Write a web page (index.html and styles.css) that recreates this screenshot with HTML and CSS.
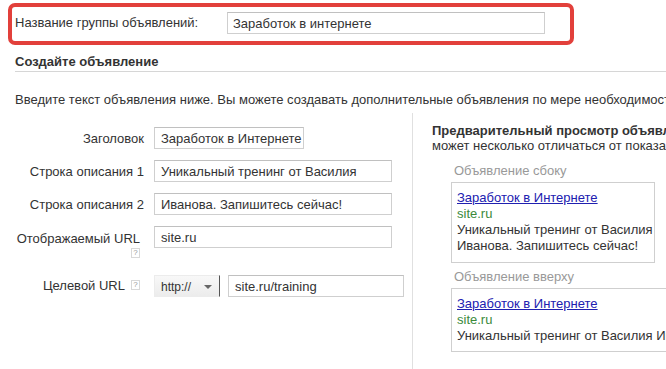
FILE: index.html
```html
<!DOCTYPE html>
<html lang="ru">
<head>
    <meta charset="UTF-8">
    <meta name="viewport" content="width=device-width, initial-scale=1.0">
    <title>Создайте объявление</title>
    <link rel="stylesheet" href="styles.css">
</head>
<body>
<div class="page">

    <!-- Ad group name -->
    <div class="group-box">
        <label class="group-label">Название группы объявлений:</label>
        <div class="text-input group-input">Заработок в интернете</div>
    </div>

    <h2 class="section-title">Создайте объявление</h2>
    <p class="intro">Введите текст объявления ниже. Вы можете создавать дополнительные объявления по мере необходимости.</p>

    <div class="ad-form">
        <!-- Fields -->
        <div class="fields">
            <div class="field-row">
                <div class="field-label">Заголовок</div>
                <div class="text-input short">Заработок в Интернете</div>
            </div>
            <div class="field-row">
                <div class="field-label">Строка описания 1</div>
                <div class="text-input">Уникальный тренинг от Василия</div>
            </div>
            <div class="field-row">
                <div class="field-label">Строка описания 2</div>
                <div class="text-input">Иванова. Запишитесь сейчас!</div>
            </div>
            <div class="field-row top url-row">
                <div class="field-label stacked">
                    <span>Отображаемый URL</span>
                    <span class="help">?</span>
                </div>
                <div class="text-input">site.ru</div>
            </div>
            <div class="field-row">
                <div class="field-label inline">
                    <span>Целевой URL</span>
                    <span class="help">?</span>
                </div>
                <div class="select">
                    <span>http://</span>
                    <span class="arrow"></span>
                </div>
                <div class="text-input target">site.ru/training</div>
            </div>
        </div>

        <!-- Preview -->
        <div class="preview">
            <div class="preview-title">Предварительный просмотр объявления</div>
            <div class="preview-note">может несколько отличаться от показа на сайте</div>

            <div class="preview-caption">Объявление сбоку</div>
            <div class="ad-box side">
                <a href="#" class="ad-link">Заработок в Интернете</a>
                <div class="ad-url">site.ru</div>
                <div class="ad-text">Уникальный тренинг от Василия</div>
                <div class="ad-text">Иванова. Запишитесь сейчас!</div>
            </div>

            <div class="preview-caption">Объявление вверху</div>
            <div class="ad-box top-ad">
                <a href="#" class="ad-link">Заработок в Интернете</a>
                <div class="ad-url">site.ru</div>
                <div class="ad-text">Уникальный тренинг от Василия Иванова. Запишитесь сейчас!</div>
            </div>
        </div>
    </div>

</div>
</body>
</html>
```

FILE: styles.css
```css
/* Base */
body {
    margin: 0;
    font-family: "Liberation Sans", Arial, sans-serif;
    font-size: 13px;
    line-height: 15px;
    color: #333;
    background: #fff;
    overflow: hidden;
}

.page {
    padding: 3px 0 0 8px;
    white-space: nowrap;
}

/* Inputs */
.text-input {
    box-sizing: border-box;
    width: 238px;
    height: 22px;
    border: 1px solid #cfcfcf;
    border-top-color: #c0c0c0;
    padding: 3px 6px 0;
    color: #333;
    background: #fff;
    overflow: hidden;
}

.text-input.short {
    width: 150px;
}

.text-input.target {
    width: 176px;
    margin-left: 8px;
}

/* Ad group box */
.group-box {
    display: flex;
    align-items: center;
    width: 558px;
    height: 34px;
    box-sizing: content-box;
    border: 4px solid #e2403b;
    border-radius: 7px;
    padding: 0;
}

.group-label {
    padding-left: 3px;
    width: 212px;
    margin-top: -3px;
}

.text-input.group-input {
    width: 318px;
    margin-top: -2px;
    padding-left: 5px;
}

/* Section title */
.section-title {
    margin: 9px 0 0 7px;
    padding-bottom: 2px;
    font-size: 13px;
    line-height: 15px;
    font-weight: bold;
    color: #333;
    border-bottom: 1px solid #d6d6d6;
}

.intro {
    margin: 20px 0 0 7px;
}

/* Form layout */
.ad-form {
    display: flex;
    margin: 6px 0 0 7px;
}

.fields {
    flex-shrink: 0;
    width: 397px;
    border-right: 1px solid #e0e0e0;
    padding-top: 14px;
    height: 260px;
}

.field-row {
    display: flex;
    align-items: center;
    margin-bottom: 11px;
}

.field-row.top {
    align-items: flex-start;
}

.field-row.url-row {
    margin-bottom: 16px;
}

.field-label {
    width: 129px;
    margin-right: 10px;
    text-align: right;
}

.field-label.stacked {
    display: flex;
    flex-direction: column;
    align-items: flex-end;
    padding-top: 5px;
    margin-right: 14px;
    width: 125px;
}

.field-label.inline {
    display: flex;
    justify-content: flex-end;
    align-items: center;
    gap: 6px;
    width: 125px;
    margin-right: 14px;
}

.help {
    display: block;
    box-sizing: border-box;
    width: 9px;
    height: 10px;
    border: 1px solid #d8d8d8;
    font-size: 8px;
    line-height: 8px;
    text-align: center;
    color: #999;
    margin-top: 2px;
}

.field-label.inline .help {
    margin-top: -2px;
}

/* Select */
.select {
    box-sizing: border-box;
    display: flex;
    align-items: center;
    justify-content: space-between;
    width: 66px;
    height: 22px;
    margin-top: 1px;
    padding: 3px 4px 0 6px;
    font-size: 12px;
    background: linear-gradient(#f8f8f8, #ececec);
    border: 1px solid #ececec;
    border-right: 1px solid #555;
}

.arrow {
    width: 0;
    height: 0;
    border-left: 4px solid transparent;
    border-right: 4px solid transparent;
    border-top: 4px solid #666;
    margin-right: 3px;
    margin-top: -2px;
}

/* Preview */
.preview {
    padding: 10px 0 0 19px;
}

.preview-title {
    font-weight: bold;
}

.preview-caption {
    color: #999;
    margin: 10px 0 4px 22px;
}

.ad-box {
    box-sizing: border-box;
    margin-left: 19px;
    border: 1px solid #cfcfcf;
    padding: 7px 5px 8px;
    line-height: 16px;
}

.ad-box.side {
    width: 204px;
    margin-bottom: -4px;
}

.ad-box.top-ad {
    width: 300px;
    padding-bottom: 7px;
}

.ad-link {
    display: block;
    color: #2020b0;
    text-decoration: underline;
}

.ad-url {
    color: #3b8a3b;
}
```
